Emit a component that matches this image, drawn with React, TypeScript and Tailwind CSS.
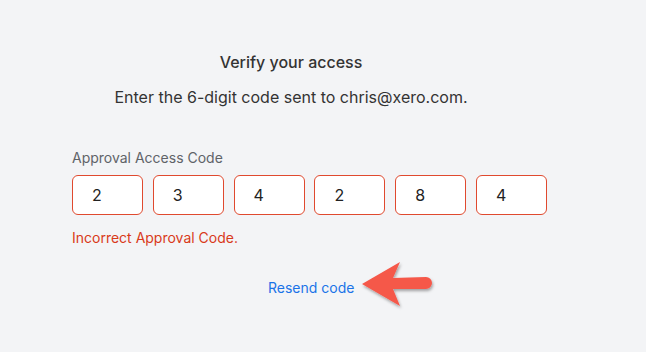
import React from "react";

const digits = ["2", "3", "4", "2", "8", "4"];

export default function App() {
  return (
    <div
      className="w-[646px] h-[352px] bg-[#f3f4f6] text-[#2b2b2b] overflow-hidden"
      style={{ fontFamily: "Inter, 'Noto Sans', sans-serif" }}
    >
      <div className="pt-[52px] flex flex-col items-center pr-[64px]">
        <h1 className="text-[16px] leading-[20px] font-medium text-[#333]">Verify your access</h1>
        <p className="mt-[15px] text-[16px] leading-[20px] text-[#333]">
          Enter the 6-digit code sent to chris@xero.com.
        </p>
      </div>
      <div className="pl-[72px] pt-[42px]">
        <div className="text-[14px] leading-[18px] text-[#5f6368]">Approval Access Code</div>
        <div className="mt-[8px] flex gap-[9.8px]">
          {digits.map((d, i) => (
            <div
              key={i}
              className="w-[71px] h-[40px] rounded-[6px] border-[1.5px] border-[#e04a2f] bg-white flex items-center pl-[19px] text-[16px] text-[#222]"
            >
              {d}
            </div>
          ))}
        </div>
        <div className="mt-[13px] text-[14px] leading-[20px] text-[#d93a1a]">Incorrect Approval Code.</div>
      </div>
      <div className="mt-[17px] flex items-center pl-[268px]">
        <span className="text-[14px] leading-[18px] text-[#1a73e8]">Resend code</span>
        <svg width="76" height="50" viewBox="0 0 76 50" className="ml-[4px] -mt-[4px]" style={{ overflow: "visible" }}>
          <defs>
            <filter id="sh" x="-20%" y="-20%" width="150%" height="160%">
              <feDropShadow dx="1" dy="2" stdDeviation="1.5" floodColor="#000" floodOpacity="0.35" />
            </filter>
          </defs>
          <g filter="url(#sh)">
            <path d="M4 23 L42 1 L35 17 L68 16 A6 6 0 0 1 68 28 L35 28 L42 45 Z" fill="#f5584a" />
          </g>
        </svg>
      </div>
    </div>
  );
}
